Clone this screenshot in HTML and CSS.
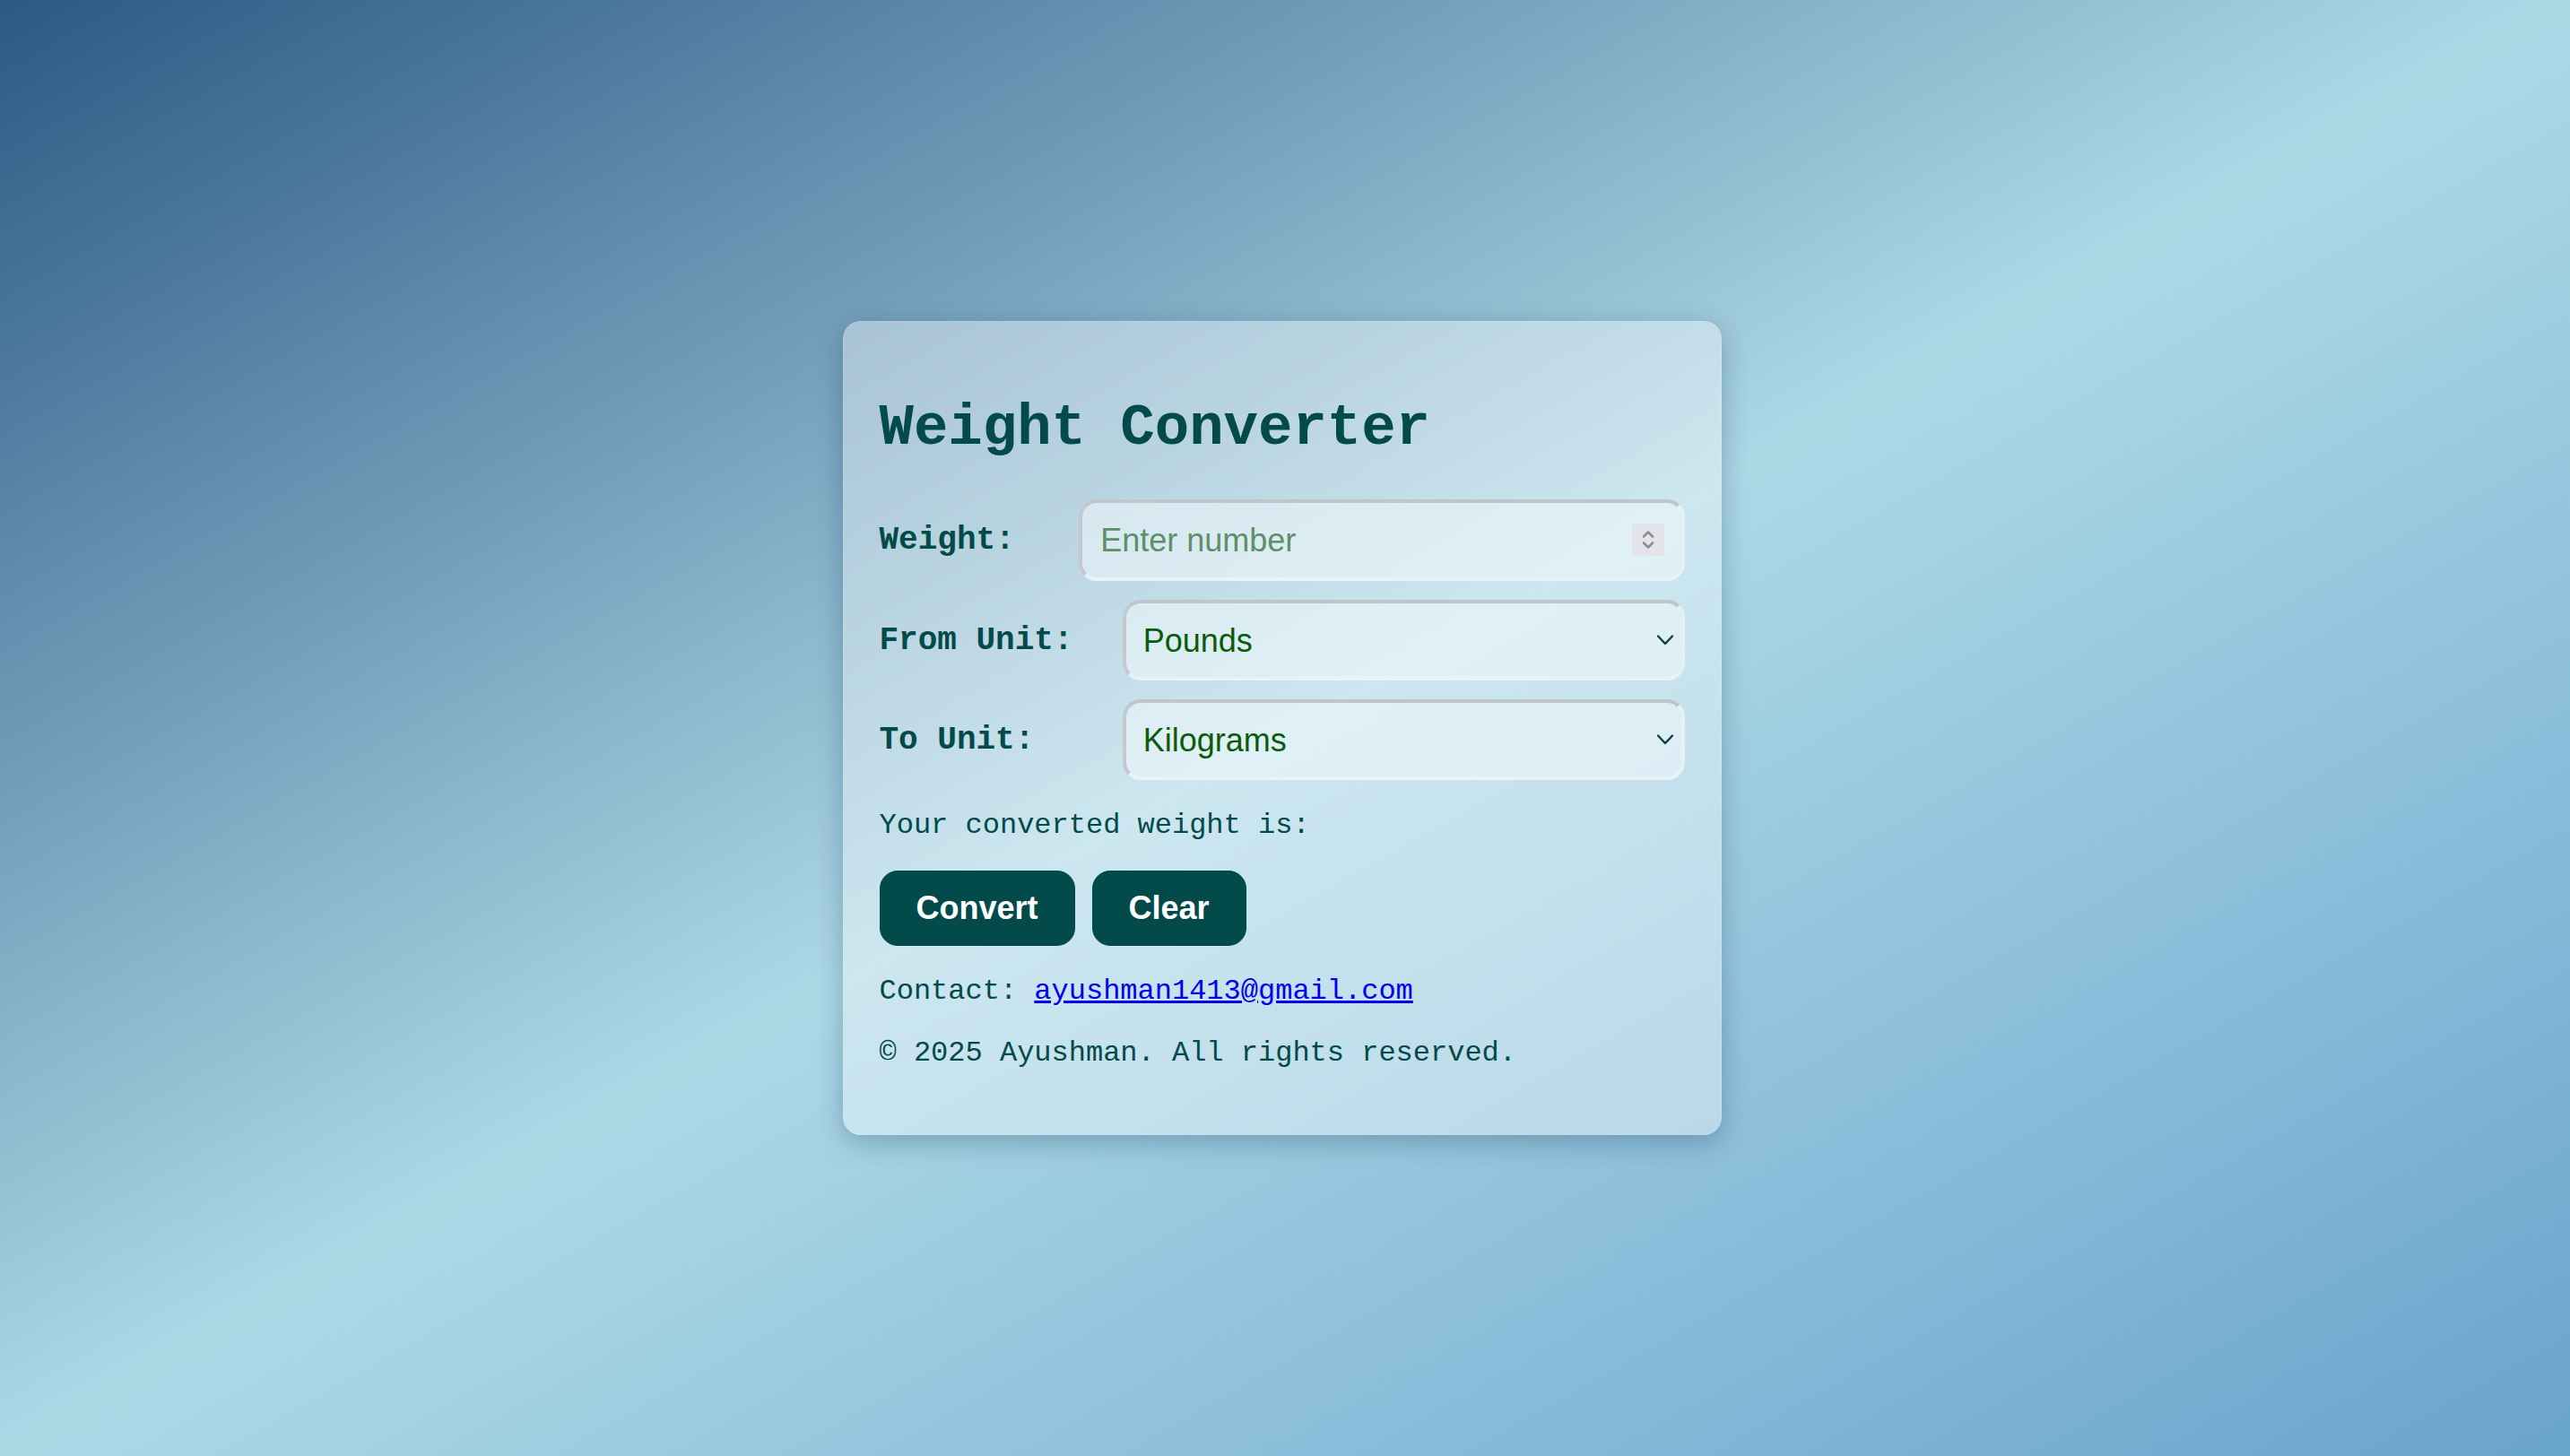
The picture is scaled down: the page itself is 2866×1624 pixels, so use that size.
FILE: index.html
```html
<!DOCTYPE html>
<html lang="en">
<head>
<meta charset="utf-8">
<title>Weight Converter</title>
<link rel="stylesheet" href="styles.css">
</head>
<body>
<main class="card">
  <h1 class="title">Weight Converter</h1>
  <div class="row">
    <label class="label" for="weight">Weight:</label>
    <div class="field field-input">
      <input class="control" id="weight" type="text" placeholder="Enter number">
      <span class="spin">
        <svg width="36" height="36" viewBox="0 0 36 36"><path d="M13 14.5 L18 9.5 L23 14.5" fill="none" stroke="#8b8b9a" stroke-width="2.6" stroke-linecap="round" stroke-linejoin="round"/><path d="M13 21.5 L18 26.5 L23 21.5" fill="none" stroke="#8b8b9a" stroke-width="2.6" stroke-linecap="round" stroke-linejoin="round"/></svg>
      </span>
    </div>
  </div>
  <div class="row">
    <label class="label" for="from">From Unit:</label>
    <div class="field field-select">
      <select class="control select" id="from">
        <option>Pounds</option>
        <option>Kilograms</option>
      </select>
      <svg class="chev" width="22" height="14" viewBox="0 0 22 14"><path d="M3 2.5 L11 11 L19 2.5" fill="none" stroke="#0b3f3f" stroke-width="2.4" stroke-linecap="round" stroke-linejoin="round"/></svg>
    </div>
  </div>
  <div class="row">
    <label class="label" for="to">To Unit:</label>
    <div class="field field-select">
      <select class="control select" id="to">
        <option>Kilograms</option>
        <option>Pounds</option>
      </select>
      <svg class="chev" width="22" height="14" viewBox="0 0 22 14"><path d="M3 2.5 L11 11 L19 2.5" fill="none" stroke="#0b3f3f" stroke-width="2.4" stroke-linecap="round" stroke-linejoin="round"/></svg>
    </div>
  </div>
  <p class="text">Your converted weight is:</p>
  <div class="buttons">
    <button class="btn" type="button">Convert</button>
    <button class="btn" type="button">Clear</button>
  </div>
  <p class="text">Contact: <a class="link" href="#">ayushman1413@gmail.com</a></p>
  <p class="text">© 2025 Ayushman. All rights reserved.</p>
</main>
</body>
</html>
```
FILE: styles.css
```css
html, body {
  margin: 0;
  padding: 0;
  height: 100%;
}

body {
  background: linear-gradient(to bottom right, #2d5884 0%, #add8e6 50%, #69a4cd 100%);
  display: flex;
  align-items: center;
  justify-content: center;
  font-family: "Liberation Mono", "Courier New", monospace;
  color: #024a4a;
}

.card {
  width: 898px;
  padding: 40px;
  margin-right: 7px;
  border: 1px solid rgba(255, 255, 255, 0.12);
  border-radius: 20px;
  background: rgba(255, 255, 255, 0.38);
  box-shadow: 0 8px 30px rgba(0, 40, 70, 0.28);
}

.title {
  font-family: "Liberation Mono", "Courier New", monospace;
  font-size: 64px;
  font-weight: bold;
  margin: 43px 0;
  color: #034a4a;
}

.row {
  display: flex;
  align-items: center;
  justify-content: space-between;
  margin-bottom: 21px;
}

.row:last-of-type {
  margin-bottom: 0;
}

.label {
  font-family: "Liberation Mono", "Courier New", monospace;
  font-size: 36px;
  font-weight: bold;
  color: #034a4a;
}

.field {
  position: relative;
}

.field-input {
  width: 75.2%;
}

.field-select {
  width: 69.8%;
}

.control {
  box-sizing: border-box;
  width: 100%;
  margin: 0;
  font-family: "Liberation Sans", Arial, sans-serif;
  font-size: 36px;
  border-style: solid;
  border-width: 4px;
  border-color: #bfc6cb #e6f1f5 #e9f3f7 #c3c9ce;
  border-radius: 20px;
  background: rgba(240, 248, 252, 0.55);
  outline: none;
  -webkit-appearance: none;
  appearance: none;
}

input.control {
  height: 91px;
  padding: 0 20px;
  color: #0a5c0a;
}

input.control::placeholder {
  color: #5b9069;
}

.select {
  height: 90px;
  padding: 0 50px 0 19px;
  color: #0a5c0a;
}

.spin {
  position: absolute;
  right: 23px;
  top: 27px;
  width: 36px;
  height: 36px;
  background: #e3e4ea;
  display: block;
}

.spin svg {
  display: block;
}

.chev {
  position: absolute;
  right: 11px;
  top: 38px;
  pointer-events: none;
}

.text {
  font-family: "Liberation Mono", "Courier New", monospace;
  font-size: 32px;
  margin: 32px 0;
  color: #034a4a;
}

.buttons {
  display: flex;
  gap: 19px;
}

.btn {
  font-family: "Liberation Sans", Arial, sans-serif;
  font-size: 36px;
  font-weight: bold;
  color: #ffffff;
  background: #024b4a;
  border: 1px solid #024b4a;
  border-radius: 20px;
  padding: 20px 40px;
  margin: 0;
  line-height: normal;
}

.link {
  color: #0000ee;
  text-decoration: underline;
}
```
